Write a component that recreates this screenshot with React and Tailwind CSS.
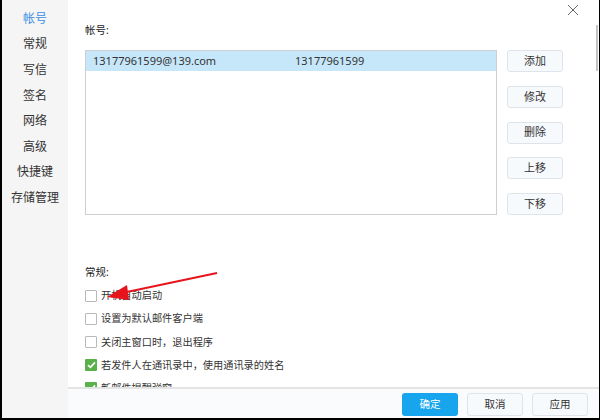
import { useState } from "react";

const navItems = ["帐号", "常规", "写信", "签名", "网络", "高级", "快捷键", "存储管理"];
const sideButtons = ["添加", "修改", "删除", "上移", "下移"];
const options = [
  { label: "开机自动启动", checked: false },
  { label: "设置为默认邮件客户端", checked: false },
  { label: "关闭主窗口时，退出程序", checked: false },
  { label: "若发件人在通讯录中，使用通讯录的姓名", checked: true },
  { label: "新邮件提醒弹窗", checked: true },
];

const font = { fontFamily: '"Noto Sans", "Noto Sans CJK SC", sans-serif' };

function Checkbox({ checked }) {
  if (checked) {
    return (
      <span className="flex h-[12px] w-[12px] items-center justify-center rounded-[1px] bg-[#5bb149]">
        <svg width="9" height="8" viewBox="0 0 9 8" fill="none">
          <path d="M1 4.2 L3.4 6.4 L8 1.4" stroke="white" strokeWidth="1.6" />
        </svg>
      </span>
    );
  }
  return <span className="h-[12px] w-[12px] rounded-[1px] border border-[#b9b9b9] bg-white" />;
}

export default function App() {
  const [active] = useState(0);

  return (
    <div
      className="relative flex h-[420px] w-[600px] overflow-hidden border-b-2 border-l-2 border-r border-black bg-white text-[#333]"
      style={font}
    >
      <nav className="flex w-[66px] shrink-0 flex-col bg-[#f5f5f5] pt-[6px]">
        {navItems.map((item, i) => (
          <div
            key={item}
            className={`flex h-[25.6px] items-center justify-center text-[12px] ${
              i === active ? "text-[#3f8fe4]" : "text-[#333]"
            }`}
          >
            {item}
          </div>
        ))}
      </nav>

      <div className="flex flex-1 flex-col">
        <div className="relative h-[387px] overflow-hidden pl-[17px] pt-[23px]">
          <div className="h-[14px] text-[10.5px] leading-[14px] text-[#222]">帐号:</div>

          <div className="mt-[13px] flex">
            <div className="h-[165px] w-[412px] border border-[#cfcfcf] bg-white">
              <div className="flex h-[20px] items-center bg-[#c6e7f9] pl-[7px] text-[11px]">
                <span className="w-[202px]">13177961599@139.com</span>
                <span>13177961599</span>
              </div>
            </div>
            <div className="ml-[10px] flex flex-col gap-[13.75px]">
              {sideButtons.map((b) => (
                <button
                  key={b}
                  className="h-[22px] w-[56px] rounded-[3px] border border-[#dfe4ea] bg-[#f7fafd] text-[11px] text-[#333]"
                >
                  {b}
                </button>
              ))}
            </div>
          </div>

          <div className="mt-[50px] h-[14px] text-[10.5px] leading-[14px] text-[#222]">常规:</div>

          <div className="mt-[5.5px] flex flex-col">
            {options.map((o) => (
              <label key={o.label} className="flex h-[23.1px] items-center gap-[4px] text-[10.2px]">
                <Checkbox checked={o.checked} />
                <span>{o.label}</span>
              </label>
            ))}
          </div>

          <svg className="absolute left-0 top-0" width="529" height="387" viewBox="0 0 529 387">
            <line x1="149" y1="273" x2="54" y2="293" stroke="#e8141b" strokeWidth="2" />
            <polygon points="39,297 59,285 61,300" fill="#e8141b" />
          </svg>
        </div>

        <div className="flex flex-1 items-center justify-end gap-[9px] border-t-2 border-[#e4e4e4] bg-[#fafbfd] pr-[11px] pt-[2px]">
          <button className="h-[23px] w-[56px] rounded-[3px] bg-[#17a6ee] text-[10.5px] text-white">确定</button>
          <button className="h-[23px] w-[56px] rounded-[3px] border border-[#dfe4ea] bg-[#f7fafd] text-[10.5px]">取消</button>
          <button className="h-[23px] w-[56px] rounded-[3px] border border-[#dfe4ea] bg-[#f7fafd] text-[10.5px]">应用</button>
        </div>
      </div>

      <svg className="absolute right-[20px] top-[4px]" width="12" height="12" viewBox="0 0 12 12">
        <path d="M1 1 L11 11 M11 1 L1 11" stroke="#666" strokeWidth="1" />
      </svg>
      <div className="absolute right-[1px] top-[25px] h-[46px] w-[2px] bg-[#c4c4c4]" />
    </div>
  );
}
